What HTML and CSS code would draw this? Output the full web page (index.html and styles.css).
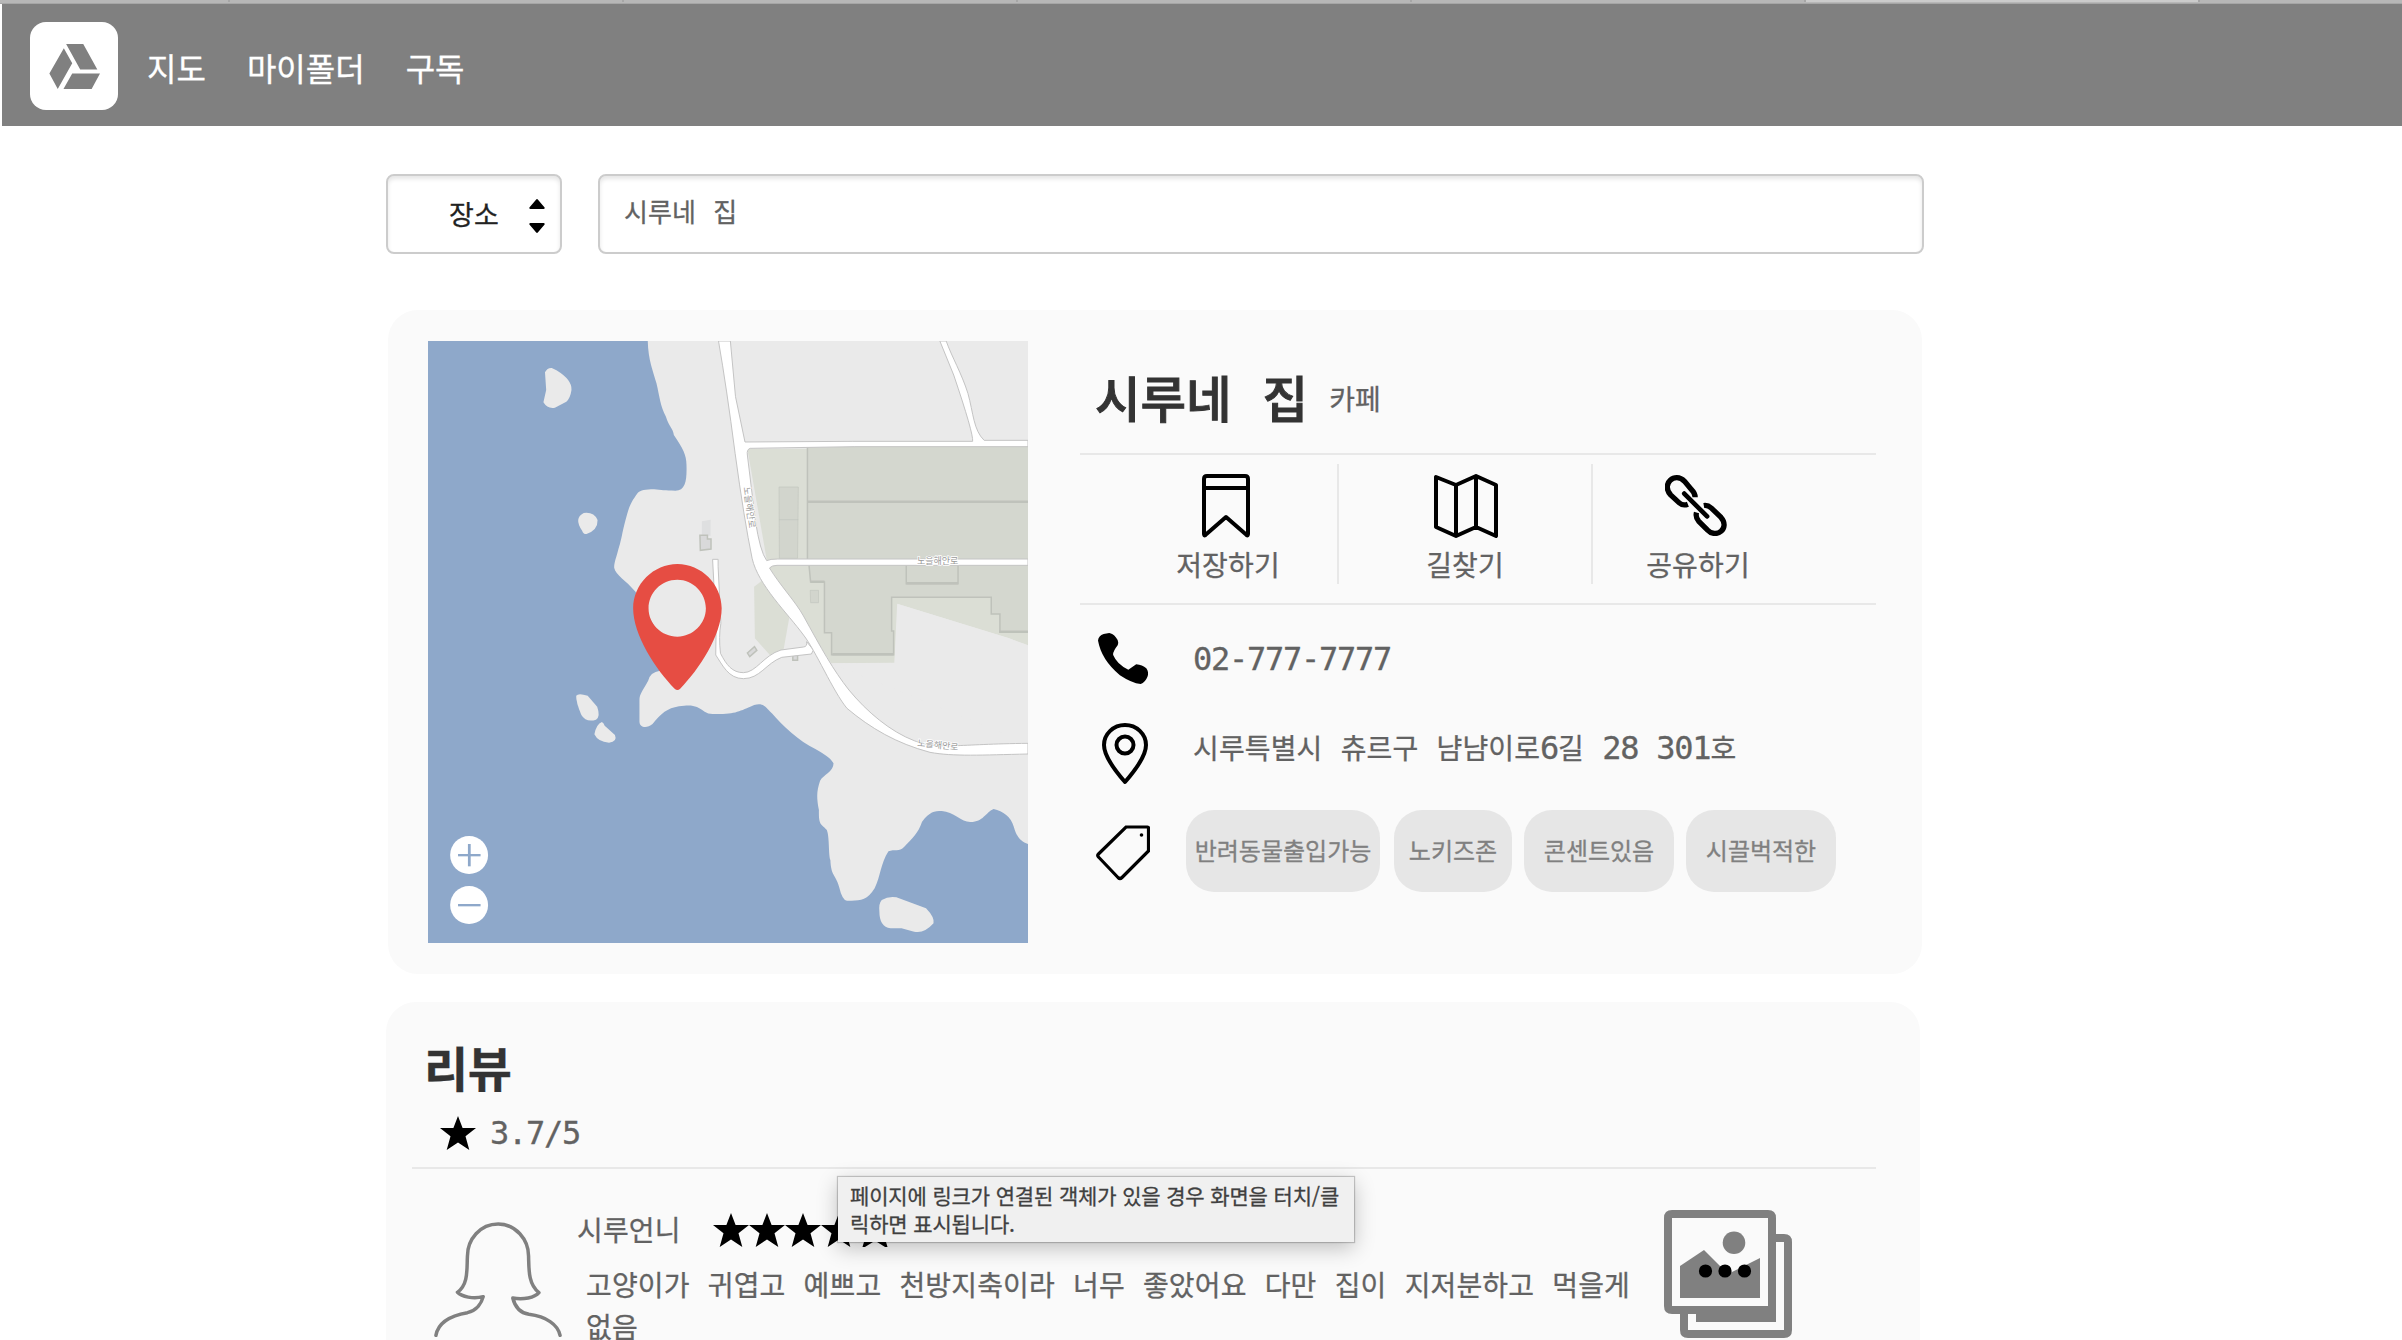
FILE: index.html
```html
<!DOCTYPE html>
<html lang="ko">
<head>
<meta charset="utf-8">
<title>시루네 집</title>
<link rel="stylesheet" href="styles.css">
</head>
<body>
<svg class="defs" aria-hidden="true">
  <symbol id="star" viewBox="0 0 36 34" preserveAspectRatio="none"><path d="M18 0L22.6 12H36L25.5 20.3L29.3 34L18 26.6L6.7 34L10.5 20.3L0 12H13.4Z"/></symbol>
</svg>
<div class="tabstrip"><i></i><i></i><i></i><i></i><i></i><i class="active"></i><i class="rest"></i></div>
<header class="header">
  <div class="logo">
    <svg viewBox="126 131 134 134" preserveAspectRatio="none" fill="#808080"><path d="M171 131H216L253 207H208ZM165 144L187 188L149 265L127 219ZM187 219H260L238 265H164Z"/></svg>
  </div>
  <nav class="nav"><a>지도</a><a>마이폴더</a><a>구독</a></nav>
</header>
<main class="main">
  <div class="search">
    <div class="field select"><span>장소</span>
      <svg class="arrows" viewBox="0 0 16 34"><path d="M7 .7Q8-.7 9 .7L15.6 8.5Q16 10 14.6 10H1.4Q0 10 .4 8.5ZM7 33.3Q8 34.7 9 33.3L15.6 25.5Q16 24 14.6 24H1.4Q0 24 .4 25.5Z"/></svg>
    </div>
    <div class="field input">시루네 집</div>
  </div>

  <section class="card place">
    <div class="map">
      <svg viewBox="20 33 1518 1806" preserveAspectRatio="none">
        <rect x="20" y="33" width="1518" height="1806" fill="#8ea8ca"/>
        <path fill="#eaeaea" d="M576 33C577 90 590 125 598 160C606 200 608 230 622 260C630 290 640 295 642 315C665 355 674 375 674 405C675 450 672 482 646 482C620 482 610 480 592 478C570 478 558 480 550 490C535 515 530 525 522 560C510 610 512 620 500 665C494 690 491 700 491 713C495 735 520 750 545 785L600 905L607 1022Q582 1026 577 1052C562 1085 555 1092 555 1110V1175C556 1195 575 1195 588 1182C610 1150 625 1135 655 1129C690 1122 700 1128 720 1145Q728 1152 740 1152C800 1153 805 1145 845 1125C870 1118 872 1130 890 1150C915 1185 960 1235 1000 1257C1025 1275 1035 1280 1046 1300C1046 1325 1020 1335 1012 1352C1004 1380 1002 1400 1009 1440C1008 1490 1016 1480 1029 1500C1036 1520 1033 1575 1038 1590C1040 1640 1050 1630 1060 1670Q1068 1711 1080 1712C1110 1712 1130 1715 1150 1675C1165 1640 1165 1600 1185 1564C1200 1556 1212 1567 1225 1550C1245 1525 1260 1510 1270 1475C1290 1445 1300 1443 1320 1443C1350 1445 1370 1477 1393 1476C1425 1476 1430 1448 1451 1437C1475 1444 1495 1460 1502 1490C1510 1525 1522 1535 1538 1542V33Z"/>
        <g fill="#eaeaea">
          <path d="M316 127Q322 113 333 114L345 121Q385 150 383 180Q380 205 370 215L341 233Q322 237 312 217L319 180Z"/>
          <path d="M414 549Q440 545 449 570Q450 600 421 612Q413 613 410 602Q388 565 414 549Z"/>
          <path d="M395 1097Q400 1088 424 1097L448 1130Q457 1160 445 1169Q420 1178 408 1155Q394 1115 395 1097Z"/>
          <path d="M460 1176Q465 1180 467 1187L493 1215Q500 1235 478 1238Q450 1236 441 1213Q446 1182 460 1176Z"/>
          <path d="M1168 1710Q1185 1698 1205 1702L1280 1735Q1302 1762 1299 1780Q1275 1812 1250 1805L1218 1795H1190Q1162 1790 1162 1745Q1160 1720 1168 1710Z"/>
        </g>
        <path fill="#dbded5" d="M828 356H984V690H877ZM880 706H1538V735L1208 822L1200 1000H1040L985 900ZM845 770L865 752L936 850L918 970L885 975L847 925Z"/>
        <path fill="#dbded5" d="M1195 802H1445V852H1467V905H1538V946L1490 925L1208 822L1200 998H1042V975H1195Z"/>
        <path fill="#d4d7cf" d="M979 346H1538V690H981ZM984 706H1538V905H1465V852H1445V802H1193V903H1198V972H1042V906H1023V757H988Z"/>
        <path fill="#eaeaea" d="M1207 821L1490 925L1538 946V1240L1040 1000L1200 998Z"/>
        <path class="edge wide" d="M981 515H1538M988 755H1023M1043 973H1198M1230 760H1361M1465 905H1538"/>
        <path class="edge" d="M984 706L988 756H1023V908H1041V974H1198V903H1193V802H1445V852H1467V906H1538M1230 706V761H1361V706M980 350V690"/>
        <g fill="#d2d5cd" class="edge"><path d="M908 471H957L955 685H909ZM908 569H957M987 781H1008V818H988Z"/></g>
        <path fill="#dedfe0" d="M713 574L735 569V617H713Z"/>
        <path class="edge" fill="#d9d9da" d="M708 616H727V627H736V657L709 661ZM828 969L846 950L852 961L834 980ZM943 975H955V991H943Z"/>
        <g class="road">
          <path d="M740 688H754V710L761 880Q755 920 760 970C775 1005 790 1028 818 1028C850 1028 870 975 913 960L970 951Q980 950 978 935L995 960L990 972L915 982C875 1000 860 1046 818 1046C780 1046 765 1005 748 975L749 890Z"/>
          <path d="M755 33H785L798 200L822 336L1095 334H1398Q1400 310 1350 135L1315 33H1331C1345 80 1370 130 1386 190C1400 250 1400 300 1427 331H1538V350H1100L835 355Q826 358 828 375L848 570Q860 665 877 692Q885 687 905 687H1538V706H903Q890 706 884 714C910 765 950 815 970 858C1015 955 1045 1020 1085 1080C1130 1145 1190 1205 1250 1232C1310 1260 1360 1242 1538 1240V1272C1420 1275 1350 1280 1290 1267C1205 1240 1140 1195 1080 1135C1045 1085 1000 960 970 915C930 850 855 765 840 685Q820 570 797 370Q775 170 755 33Z"/>
        </g>
        <g class="road-name">
          <text transform="translate(1257 703) scale(2.53 3)">노을해안로</text>
          <text transform="translate(1257 1248) scale(2.53 3) rotate(6)">노을해안로</text>
          <text transform="translate(818 472) scale(2.53 3) rotate(82)">노을해안로</text>
        </g>
        <path fill="#e64d43" fill-rule="evenodd" d="M651 702C711 702 763 762 763 835C763 915 705 1020 658 1076Q651 1084 644 1076C597 1020 539 915 539 835C539 762 591 702 651 702ZM651 749C610 749 578 788 578 835C578 882 610 920 651 920C690 920 723 882 723 835C723 788 690 749 651 749Z"/>
        <ellipse cx="124" cy="1575" rx="48" ry="57" fill="#fff"/><ellipse cx="124" cy="1725" rx="48" ry="57" fill="#fff"/>
        <g fill="#8ea8ca"><rect x="96" y="1572" width="57" height="7"/><rect x="121" y="1542" width="7" height="67"/><rect x="96" y="1722" width="57" height="7"/></g>
      </svg>
    </div>
    <div class="info">
      <div class="title-row"><h1>시루네 집</h1><span>카페</span></div>
      <div class="actions">
        <div class="action save">
          <svg width="48" height="64" viewBox="0 0 48 64" class="line4"><path d="M2 60V5Q2 2 5 2H43Q46 2 46 5V60Q45.500 63 43.500 60L24 43L4.500 60Q2.500 63 2 60ZM2 14H46"/></svg>
          <span>저장하기</span>
        </div>
        <div class="action">
          <svg width="64" height="64" viewBox="0 0 64 64" class="line4"><path d="M2 3V53L22 62L42 53L62 62V11L42 2L22 11ZM22 10V61M42 3V54"/></svg>
          <span>길찾기</span>
        </div>
        <div class="action share">
          <svg width="62" height="62" viewBox="75 41 187 185" fill="none" stroke="#000" stroke-width="16"><path d="M166 110Q166 98 155 87L134 62C105 32 62 70 92 103L118 127Q129 137 144 131M192 135Q204 133 215 143L244 171C272 203 230 238 202 208L177 183Q166 171 170 156"/><path d="M133 99L202 168" stroke-width="14" stroke-linecap="round"/></svg>
          <span>공유하기</span>
        </div>
      </div>
      <div class="row phone">
        <div class="slot"><svg width="50" height="51" viewBox="68 129 89 150" preserveAspectRatio="none"><path d="M68 151Q69 137 78 132L88 129Q94 130 100 142Q106 153 103 165Q94 184 95 194Q102 222 122 237L136 221Q147 222 154 233Q159 244 156 258Q152 275 144 279Q128 276 107 253Q74 208 68 151Z"/></svg></div>
        <p><span class="num">02-777-7777</span></p>
      </div>
      <div class="row address">
        <div class="slot"><svg width="46" height="62" viewBox="0 0 46 62" class="line4"><path d="M23 59Q2 35 2 22A21 20 0 0 1 44 22Q44 35 23 59Z"/><circle cx="23" cy="22" r="8.500"/></svg></div>
        <p>시루특별시 츄르구 냠냠이로<span class="num">6</span>길 <span class="num">28</span> <span class="num">301</span>호</p>
      </div>
      <div class="row tags">
        <div class="slot"><svg width="54" height="56" viewBox="0 0 54 56"><path d="M30 2H51.500Q52.500 2 52.500 3V26L26 52.500Q24 54.500 22 52.500L2.500 32Q1 30.500 2.500 29Z" fill="none" stroke="#000" stroke-width="3.200"/><circle cx="45.500" cy="10" r="1.800"/></svg></div>
        <ul><li class="t1">반려동물출입가능</li><li class="t2">노키즈존</li><li class="t3">콘센트있음</li><li class="t3">시끌벅적한</li></ul>
      </div>
    </div>
  </section>

  <section class="card reviews">
    <h2>리뷰</h2>
    <div class="rating"><svg class="star"><use href="#star"/></svg><span class="num">3.7/5</span></div>
    <article class="review">
      <svg class="avatar" viewBox="168 728 333 345" preserveAspectRatio="none"><path d="M173 1068C178 1035 205 1010 255 1000C280 993 292 970 296 952C270 960 240 952 229 939C258 915 253 870 255 830C255 780 288 734 335 734C380 734 414 780 414 830C415 870 413 915 441 940C430 955 400 962 373 956C378 980 390 1000 415 1005C460 1012 490 1035 496 1068"/></svg>
      <div class="review-body">
        <div class="author"><span>시루언니</span>
          <div class="stars"><svg class="star"><use href="#star"/></svg><svg class="star"><use href="#star"/></svg><svg class="star"><use href="#star"/></svg><svg class="star"><use href="#star"/></svg><svg class="star open" viewBox="0 0 36 34"><path d="M18 4L21.800 14H32.500L25 20.800L28.500 32.500L18 26L7.500 32.500L11 20.800L3.500 14H14.200Z"/></svg></div>
        </div>
        <p>고양이가 귀엽고 예쁘고 천방지축이라 너무 좋았어요 다만 집이 지저분하고 먹을게<br>없음</p>
      </div>
      <svg class="photos" viewBox="0 0 128 128"><path fill="#808080" fill-rule="evenodd" d="M8 0H104Q112 0 112 8V24H120Q128 24 128 32V120Q128 128 120 128H24Q16 128 16 120V104H8Q0 104 0 96V8Q0 0 8 0ZM8 8V96H104V8ZM112 32V112H32V104H24V120H120V32ZM16 56L40 40L64 64L96 48V88H16Z"/><circle cx="70" cy="32.700" r="11.300" fill="#808080"/><circle cx="41.500" cy="61" r="6.600"/><circle cx="61" cy="61" r="6.600"/><circle cx="80.500" cy="61" r="6.600"/></svg>
    </article>
  </section>
</main>
<div class="tooltip">페이지에 링크가 연결된 객체가 있을 경우 화면을 터치/클<br>릭하면 표시됩니다.</div>
</body>
</html>
```

FILE: styles.css
```css
* { box-sizing: border-box; }
body {
  margin: 0;
  height: 1340px;
  overflow: hidden;
  position: relative;
  background: #fff;
  color: #626262;
  font: 28px/42px "DejaVu Sans Mono", "Noto Sans CJK KR", monospace;
  word-spacing: 1.2px;
  letter-spacing: .13px;
  -webkit-text-stroke: .3px;
}
svg { display: block; flex: none; }
.defs { position: absolute; width: 0; height: 0; }
h1, h2, p, ul { margin: 0; padding: 0; }
ul { list-style: none; }

.tabstrip { display: flex; height: 4px; background: #b7b7b7; border-bottom: 1px solid #a6a6a6; }
.tabstrip i { flex: none; width: 394px; height: 2px; border-right: 2px solid #a6a6a6; }
.tabstrip i:first-child { width: 230px; }
.tabstrip .active { background: #cbcbcb; }
.tabstrip .rest { flex: 1; border: 0; }

.header { display: flex; height: 122px; margin-left: 2px; padding: 18px 28px; background: #808080; }
.logo { display: flex; align-items: center; justify-content: center; width: 88px; height: 88px; border-radius: 16px; background: #fff; }
.logo svg { width: 51px; height: 45px; }
.nav { display: flex; gap: 41px; margin: 0 0 0 29px; color: #fff; font: 32px/90px "Noto Sans CJK KR", sans-serif; letter-spacing: 0; }

.main { width: 1538px; margin: 48px 0 0 386px; }
.search { display: flex; gap: 36px; height: 80px; }
.field { display: flex; align-items: center; border: 2px solid #ccc; border-radius: 8px; background: #fff; box-shadow: inset 0 3px 4px #e6e6e6; }
.select { width: 176px; justify-content: flex-end; padding-right: 15px; gap: 30px; color: #222; font-size: 27px; }
.select span { padding-top: 4px; }
.arrows { width: 16px; height: 34px; margin-top: 4px; }
.input { flex: 1; padding: 0 0 3px 24px; font-size: 26px; }

.card { width: 1534px; border-radius: 30px; background: #fafafa; }
.place { display: flex; gap: 52px; height: 664px; margin: 56px 0 0 2px; padding: 31px 40px; }
.map { width: 600px; height: 602px; flex: none; letter-spacing: 0; -webkit-text-stroke: 0; }
.map svg { width: 100%; height: 100%; }
.edge { stroke: #bfc2bb; stroke-width: 1.5; vector-effect: non-scaling-stroke; }
.edge.wide { stroke-width: 2.500; }
path.edge:not([fill]) { fill: none; }
.road path { fill: #fff; stroke: #c4c4c4; stroke-width: 1; vector-effect: non-scaling-stroke; }
.road-name { font: 9px "Noto Sans CJK KR", sans-serif; fill: #999; stroke: #fff; stroke-width: 1.500px; paint-order: stroke; }

.info { width: 796px; }
.title-row { display: flex; align-items: center; gap: 21px; height: 114px; padding: 7px 0 0 15px; border-bottom: 2px solid #e8e8e8; }
h1 { color: #333; font-size: 49.500px; font-weight: 500; line-height: 60px; letter-spacing: 0; -webkit-text-stroke: 1px; }
.actions { display: flex; height: 150px; padding: 9px 0 19px; border-bottom: 2px solid #e8e8e8; }
.action { display: flex; flex-direction: column; align-items: center; justify-content: space-between; width: 254px; padding: 10px 0 0; border-right: 2px solid #e8e8e8; }
.action span { height: 38px; }
.action svg { position: relative; left: 1px; }
.save { width: 259px; padding-left: 39px; }
.action.save svg { left: -2px; }
.share { width: 283px; padding-right: 73px; border: 0; }
.action.share svg { left: -2px; }
.line4 { fill: none; stroke: #000; stroke-width: 4; stroke-linejoin: round; }
.row { display: flex; align-items: center; padding-left: 16px; }
.slot { display: flex; justify-content: center; width: 54px; margin-right: 43px; }
.num { font-size: 32px; letter-spacing: -1.260px; }
.phone { height: 106px; }
.phone p { padding-top: 3px; }
.address { height: 86px; }
.address p { padding-bottom: 10px; }
.address svg { margin-left: 4px; }
.tags { height: 108px; }
.tags .slot { margin-right: 36px; padding-top: 4px; }
ul { display: flex; gap: 12px; }
li { height: 82px; border-radius: 28px; background: #e6e6e6; color: #808080; font: 24px/79px "Noto Sans CJK KR", sans-serif; letter-spacing: 0; text-align: center; white-space: nowrap; }
.t1 { width: 194px; margin-right: 2px; }
.t2 { width: 118px; }
.t3 { width: 150px; }

.reviews { height: 338px; margin-top: 28px; padding: 0 44px 0 26px; border-radius: 30px 30px 0 0; overflow: hidden; }
h2 { height: 98px; padding: 32px 0 0 12px; color: #333; font: bold 48px/64px "Noto Sans CJK KR", sans-serif; letter-spacing: -.5px; }
.rating { display: flex; align-items: center; gap: 14px; height: 69px; padding: 0 0 2px 28px; border-bottom: 2px solid #e8e8e8; }
.star { width: 36px; height: 34px; }
.open path { fill: none; stroke: #000; stroke-width: 3; }
.review { display: flex; padding-top: 41px; }
.avatar { width: 128px; height: 115px; margin: 12px 0 0 22px; }
.avatar path { fill: none; stroke: #808080; stroke-width: 3.500; stroke-linecap: round; stroke-linejoin: round; vector-effect: non-scaling-stroke; }
.review-body { width: 1087px; margin-left: 15px; }
.author { display: flex; align-items: center; gap: 32px; height: 40px; }
.author span { padding-top: 3px; }
.stars { display: flex; }
.review-body p { margin: 16px 0 0 9px; white-space: nowrap; }
.photos { width: 128px; height: 128px; }

.tooltip {
  position: absolute;
  left: 838px;
  top: 1177px;
  width: 516px;
  height: 65px;
  padding: 4px 12px;
  background: #f0f0f0;
  box-shadow: 0 0 1px 1px rgba(0,0,0,.2), 0 6px 20px rgba(0,0,0,.24);
  color: #404040;
  font: 21px/28px "Noto Sans CJK KR", sans-serif;
  letter-spacing: -.15px;
  word-spacing: 0;
  white-space: nowrap;
}
```
